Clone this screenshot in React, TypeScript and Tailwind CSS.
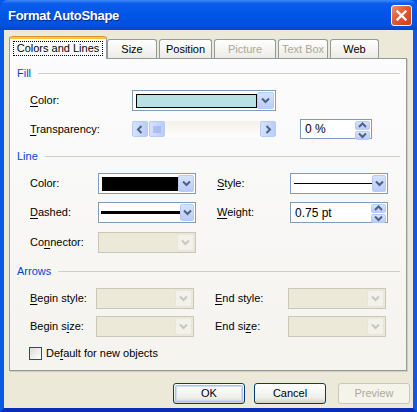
import React from 'react'

const ui = "font-['Liberation_Sans',Arial,sans-serif] text-[11px] leading-none text-black"

const Chevron = ({ dir = 'down', faded = false }: { dir?: 'down' | 'up' | 'left' | 'right'; faded?: boolean }) => {
  const d = {
    down: 'M1 1.5 L4.5 5 L8 1.5',
    up: 'M1 5 L4.5 1.5 L8 5',
    left: 'M5.5 1 L2 4.5 L5.5 8',
    right: 'M2.5 1 L6 4.5 L2.5 8',
  }[dir]
  const vertical = dir === 'down' || dir === 'up'
  return (
    <svg width={vertical ? 9 : 8} height={vertical ? 7 : 9} viewBox={vertical ? '0 0 9 7' : '0 0 8 9'}>
      <path d={d} fill="none" stroke={faded ? '#C9C7BA' : '#4D6185'} strokeWidth="2" />
    </svg>
  )
}

const DropBtn = ({ disabled }: { disabled?: boolean }) => (
  <div
    className={`flex w-[17px] items-center justify-center rounded-[2px] border ${
      disabled
        ? 'border-[#E8E6DC] bg-[#F2F1EA]'
        : 'border-[#B6CBF8] bg-[linear-gradient(180deg,#D6E3FE,#B9CCF8)]'
    }`}
  >
    <Chevron faded={disabled} />
  </div>
)

const Combo = ({
  w,
  disabled,
  children,
}: {
  w: string
  disabled?: boolean
  children?: React.ReactNode
}) => (
  <div
    className={`flex h-[21px] ${w} border p-px ${
      disabled ? 'border-[#C9C7BA] bg-[#ECE9D8]' : 'border-[#7F9DB9] bg-white'
    }`}
  >
    <div className="flex flex-1 items-center">{children}</div>
    <DropBtn disabled={disabled} />
  </div>
)

const Spin = ({ w, h, value }: { w: string; h: string; value: string }) => (
  <div className={`flex ${w} ${h} border border-[#7F9DB9] bg-white p-px`}>
    <div className="flex flex-1 items-center pl-[3px] text-[12px]">{value}</div>
    <div className="flex w-[15px] flex-col gap-px">
      <div className="flex flex-1 items-center justify-center rounded-[2px] border border-[#B6CBF8] bg-[linear-gradient(180deg,#D6E3FE,#B9CCF8)]">
        <Chevron dir="up" />
      </div>
      <div className="flex flex-1 items-center justify-center rounded-[2px] border border-[#B6CBF8] bg-[linear-gradient(180deg,#D6E3FE,#B9CCF8)]">
        <Chevron dir="down" />
      </div>
    </div>
  </div>
)

const ScrollBtn = ({ children }: { children: React.ReactNode }) => (
  <div className="flex h-[16px] w-[16px] items-center justify-center rounded-[2px] border border-[#B6CBF8] bg-[linear-gradient(90deg,#D6E3FE,#B9CCF8)]">
    {children}
  </div>
)

const Section = ({ title }: { title: string }) => (
  <div className="flex h-[13px] items-center gap-[7px] pl-[7px] pr-[6px]">
    <span className="text-[#0046D5]">{title}</span>
    <div className="h-px flex-1 bg-[#D0D0BF]" />
  </div>
)

const Label = ({ w, children }: { w: string; children: React.ReactNode }) => (
  <div className={`${w} shrink-0 whitespace-nowrap`}>{children}</div>
)

const K = ({ children }: { children: React.ReactNode }) => (
  <span className="underline underline-offset-[2px]">{children}</span>
)

const TabIdle = ({ w, ml, text, off }: { w: string; ml: string; text: string; off?: boolean }) => (
  <div
    className={`flex h-[19px] ${w} ${ml} items-center justify-center whitespace-nowrap rounded-t-[3px] border border-b-0 border-[#919B9C] bg-[linear-gradient(180deg,#FFFFFF,#ECEBE6)] ${
      off ? 'text-[#ACA899]' : ''
    }`}
  >
    {text}
  </div>
)

const Btn = ({ text, ml, primary, off }: { text: string; ml: string; primary?: boolean; off?: boolean }) => (
  <div
    className={`flex h-[21px] w-[72px] ${ml} rounded-[3px] border ${
      off ? 'border-[#C9C7BA] bg-[#F5F4EA] text-[#ACA899]' : 'border-[#003C74] bg-[linear-gradient(180deg,#FFFFFF,#F0F0EA_70%,#D6D0C5)]'
    } p-px`}
  >
    <div
      className={`flex flex-1 items-center justify-center rounded-[2px] ${
        primary ? 'border border-[#A9C0F1] shadow-[inset_0_0_0_1px_#CEDCF8]' : ''
      }`}
    >
      {text}
    </div>
  </div>
)

export default function App() {
  return (
    <div className={`${ui} flex h-[412px] w-[417px] flex-col bg-[#0054E3]`}>
      {/* title bar */}
      <div className="flex h-[30px] shrink-0 items-center rounded-t-[8px] bg-[linear-gradient(180deg,#3D8AF7_0%,#0A5DEB_12%,#0055E5_50%,#0151E0_85%,#0346CC_100%)] pl-[8px] pr-[5px]">
        <span className="flex-1 text-[13px] font-bold tracking-[-0.3px] text-white [text-shadow:1px_1px_0_#0A2A8C]">
          Format AutoShape
        </span>
        <div className="flex h-[21px] w-[21px] items-center justify-center rounded-[3px] border border-white bg-[linear-gradient(135deg,#F0906B,#E2582F_45%,#C9411C)]">
          <svg width="11" height="11" viewBox="0 0 11 11">
            <path d="M1.5 1.5 L9.5 9.5 M9.5 1.5 L1.5 9.5" stroke="white" strokeWidth="2.4" strokeLinecap="square" />
          </svg>
        </div>
      </div>

      {/* dialog body */}
      <div className="flex flex-1 flex-col border-x-4 border-b-4 border-x-[#0A5AE8] border-b-[#0A2DB8] bg-[#ECE9D8] pl-[5px] pt-[6px]">
        {/* tabs */}
        <div className="flex h-[22px] items-end">
          <div className="relative z-10 -mb-px flex h-[23px] w-[98px] flex-col rounded-t-[3px] border-x border-[#919B9C] bg-[#FCFCFE]">
            <div className="h-[3px] rounded-t-[3px] border-t border-[#E68B2C] bg-[#FFC73C]" />
            <div className="flex flex-1 items-center justify-center pb-[2px]">
              <span className="whitespace-nowrap border border-dotted border-black px-[3px] py-[1px]">Colors and Lines</span>
            </div>
          </div>
          <TabIdle w="w-[50px]" ml="ml-0" text="Size" />
          <TabIdle w="w-[53px]" ml="ml-[2px]" text="Position" />
          <TabIdle w="w-[62px]" ml="ml-[2px]" text="Picture" off />
          <TabIdle w="w-[50px]" ml="ml-[2px]" text="Text Box" off />
          <TabIdle w="w-[49px]" ml="ml-[2px]" text="Web" />
        </div>

        {/* tab page */}
        <div className="flex h-[313px] w-[398px] flex-col border border-[#919B9C] bg-[linear-gradient(180deg,#FCFCFE,#F4F3EE)] pt-[8px] shadow-[1px_1px_0_#D0CEBF]">
          <Section title="Fill" />
          <div className="mt-[10px] flex h-[21px] items-center pl-[20px]">
            <Label w="w-[102px]"><K>C</K>olor:</Label>
            <Combo w="w-[144px]">
              <div className="ml-[2px] h-[14px] w-[121px] border border-black bg-[#B9E0E3]" />
            </Combo>
          </div>
          <div className="mt-[8px] flex h-[20px] items-center pl-[20px]">
            <Label w="w-[102px]"><K>T</K>ransparency:</Label>
            <div className="flex h-[16px] w-[144px] bg-[linear-gradient(180deg,#F3F1EC,#FEFEFB)]">
              <ScrollBtn><Chevron dir="left" /></ScrollBtn>
              <div className="ml-px">
                <ScrollBtn>
                  <svg width="8" height="7" viewBox="0 0 8 7">
                    <path d="M1 0 V7 M3 0 V7 M5 0 V7 M7 0 V7" stroke="#8DA6E0" strokeWidth="1" />
                  </svg>
                </ScrollBtn>
              </div>
              <div className="flex-1" />
              <ScrollBtn><Chevron dir="right" /></ScrollBtn>
            </div>
            <div className="ml-[24px]">
              <Spin w="w-[72px]" h="h-[20px]" value="0 %" />
            </div>
          </div>

          <div className="mt-[11px]">
            <Section title="Line" />
          </div>
          <div className="mt-[10px] flex h-[21px] items-center pl-[20px]">
            <Label w="w-[68px]">Color:</Label>
            <Combo w="w-[98px]">
              <div className="ml-[2px] h-[14px] w-[76px] bg-black" />
            </Combo>
            <div className="w-[21px]" />
            <Label w="w-[73px]"><K>S</K>tyle:</Label>
            <Combo w="w-[98px]">
              <div className="ml-[2px] h-px w-[78px] bg-black" />
            </Combo>
          </div>
          <div className="mt-[8px] flex h-[21px] items-center pl-[20px]">
            <Label w="w-[68px]"><K>D</K>ashed:</Label>
            <Combo w="w-[98px]">
              <div className="ml-[1px] h-[3px] w-[79px] bg-black" />
            </Combo>
            <div className="w-[21px]" />
            <Label w="w-[73px]"><K>W</K>eight:</Label>
            <Spin w="w-[98px]" h="h-[21px]" value="0.75 pt" />
          </div>
          <div className="mt-[9px] flex h-[21px] items-center pl-[20px]">
            <Label w="w-[68px]">Co<K>n</K>nector:</Label>
            <Combo w="w-[98px]" disabled />
          </div>

          <div className="mt-[12px]">
            <Section title="Arrows" />
          </div>
          <div className="mt-[10px] flex h-[21px] items-center pl-[20px]">
            <Label w="w-[66px]"><K>B</K>egin style:</Label>
            <Combo w="w-[98px]" disabled />
            <div className="w-[21px]" />
            <Label w="w-[73px]"><K>E</K>nd style:</Label>
            <Combo w="w-[98px]" disabled />
          </div>
          <div className="mt-[7px] flex h-[21px] items-center pl-[20px]">
            <Label w="w-[66px]">Begin s<K>i</K>ze:</Label>
            <Combo w="w-[98px]" disabled />
            <div className="w-[21px]" />
            <Label w="w-[73px]">End si<K>z</K>e:</Label>
            <Combo w="w-[98px]" disabled />
          </div>
          <div className="mt-[10px] flex h-[13px] items-center gap-[4px] pl-[19px]">
            <div className="h-[13px] w-[13px] border border-[#1C5180] bg-[linear-gradient(135deg,#DCDCD7,#FFFFFF)]" />
            <span>De<K>f</K>ault for new objects</span>
          </div>
        </div>

        {/* buttons */}
        <div className="mt-[12px] flex pl-[164px]">
          <Btn text="OK" ml="ml-0" primary />
          <Btn text="Cancel" ml="ml-[9px]" />
          <Btn text="Preview" ml="ml-[12px]" off />
        </div>
      </div>
    </div>
  )
}
